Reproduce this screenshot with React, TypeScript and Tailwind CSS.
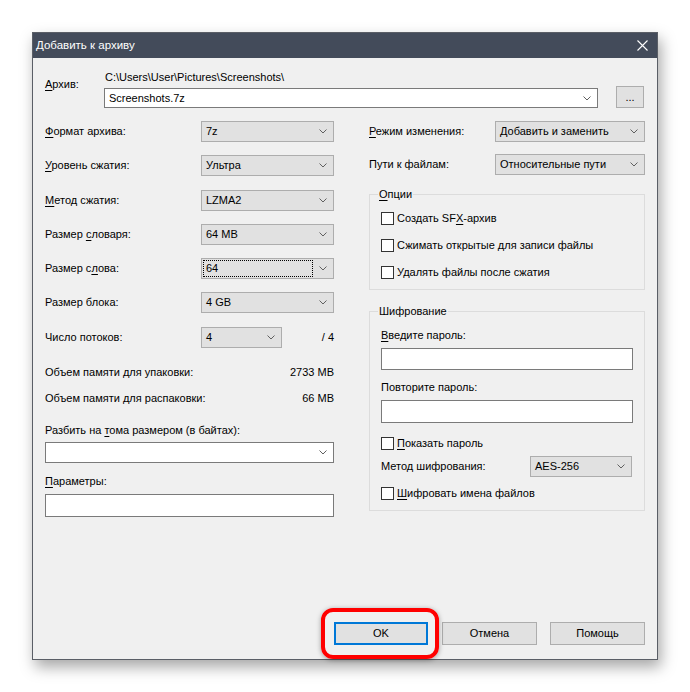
import React from "react";

const font = { fontFamily: '"Liberation Sans", Arial, sans-serif' };

function Chevron() {
  return (
    <svg width="8" height="5" viewBox="0 0 8 5" className="shrink-0">
      <polyline points="0.5,0.5 4,4 7.5,0.5" fill="none" stroke="#606060" strokeWidth="1" />
    </svg>
  );
}

function Select({
  value,
  className = "",
  focus = false,
  white = false,
}: {
  value: string;
  className?: string;
  focus?: boolean;
  white?: boolean;
}) {
  return (
    <div
      className={`flex items-stretch border p-[1px] ${
        white ? "bg-white border-[#7a7a7a]" : "bg-[#e1e1e1] border-[#adadad]"
      } ${className}`}
    >
      <div
        className={`flex-1 flex items-center pl-[2px] leading-[15px] whitespace-nowrap overflow-hidden ${
          focus ? "border border-dotted border-black pl-[1px]" : "border border-transparent"
        }`}
      >
        {value}
      </div>
      <div className="w-[19px] flex items-center justify-center">
        <Chevron />
      </div>
    </div>
  );
}

function Checkbox({ children }: { children: React.ReactNode }) {
  return (
    <div className="flex items-center h-[16px]">
      <div className="w-[13px] h-[13px] border border-[#333] bg-white shrink-0" />
      <span className="ml-[3px] leading-[15px] whitespace-nowrap">{children}</span>
    </div>
  );
}

function Row({ label, children }: { label: React.ReactNode; children: React.ReactNode }) {
  return (
    <div className="flex items-center h-[21px]">
      <div className="w-[156px] leading-[15px] whitespace-nowrap">{label}</div>
      {children}
    </div>
  );
}

export default function App() {
  return (
    <div className="min-h-screen bg-white pl-[32px] pt-[32px] text-[11px] text-black" style={font}>
      <div className="w-[626px] h-[628px] border border-[#5a5e66] bg-[#f0f0f0] flex flex-col shadow-[3px_7px_14px_rgba(0,0,0,0.35)]">
        {/* title bar */}
        <div className="h-[25px] bg-[#434b5a] flex items-center pl-[3px] pr-[9px] text-white text-[11.5px] shrink-0">
          <span className="flex-1">Добавить к архиву</span>
          <svg width="11" height="11" viewBox="0 0 11 11">
            <path d="M0.5 0.5 L10.5 10.5 M10.5 0.5 L0.5 10.5" stroke="#fff" strokeWidth="1.1" />
          </svg>
        </div>

        <div className="flex-1 flex flex-col px-[12px] pt-[12px]">
          {/* archive path */}
          <div className="flex">
            <div className="w-[59px] pt-[7px] leading-[15px]">
              <u className="underline-offset-2">А</u>рхив:
            </div>
            <div className="w-[494px] flex flex-col">
              <div className="h-[15px] leading-[15px] pl-[1px]">C:\Users\User\Pictures\Screenshots\</div>
              <Select value="Screenshots.7z" white className="h-[20px] mt-[3px]" />
            </div>
            <div className="ml-[18px] mt-[16px] w-[28px] h-[22px] border border-[#adadad] bg-[#e1e1e1] flex items-center justify-center leading-none">
              ...
            </div>
          </div>

          {/* columns */}
          <div className="flex mt-[13px]">
            {/* left column */}
            <div className="w-[289px] flex flex-col">
              <div className="flex flex-col gap-[13.3px]">
                <Row label={<><u className="underline-offset-2">Ф</u>ормат архива:</>}>
                  <Select value="7z" className="w-[133px] h-[21px]" />
                </Row>
                <Row label={<><u className="underline-offset-2">У</u>ровень сжатия:</>}>
                  <Select value="Ультра" className="w-[133px] h-[21px]" />
                </Row>
                <Row label={<><u className="underline-offset-2">М</u>етод сжатия:</>}>
                  <Select value="LZMA2" className="w-[133px] h-[21px]" />
                </Row>
                <Row label={<>Размер <u className="underline-offset-2">с</u>ловаря:</>}>
                  <Select value="64 MB" className="w-[133px] h-[21px]" />
                </Row>
                <Row label={<>Размер с<u className="underline-offset-2">л</u>ова:</>}>
                  <Select value="64" focus className="w-[133px] h-[21px]" />
                </Row>
                <Row label="Размер блока:">
                  <Select value="4 GB" className="w-[133px] h-[21px]" />
                </Row>
                <Row label="Число потоков:">
                  <Select value="4" className="w-[81px] h-[21px]" />
                  <span className="ml-auto leading-[15px]">/ 4</span>
                </Row>
              </div>

              <div className="flex justify-between leading-[16px] h-[16px] mt-[16px]">
                <span>Объем памяти для упаковки:</span>
                <span>2733 MB</span>
              </div>
              <div className="flex justify-between leading-[16px] h-[16px] mt-[10px]">
                <span>Объем памяти для распаковки:</span>
                <span>66 MB</span>
              </div>

              <div className="leading-[16px] h-[16px] mt-[16px]">
                Разбить на <u className="underline-offset-2">т</u>ома размером (в байтах):
              </div>
              <Select value="" white className="h-[21px] mt-[4px]" />

              <div className="leading-[16px] h-[16px] mt-[10px]">
                <u className="underline-offset-2">П</u>араметры:
              </div>
              <div className="h-[23px] mt-[5px] border border-[#7a7a7a] bg-white" />
            </div>

            {/* right column */}
            <div className="ml-[35px] w-[277px] flex flex-col">
              <div className="flex items-center h-[21px]">
                <span className="flex-1 leading-[15px]">
                  <u className="underline-offset-2">Р</u>ежим изменения:
                </span>
                <Select value="Добавить и заменить" className="w-[150px] h-[21px]" />
              </div>
              <div className="flex items-center h-[21px] mt-[12px]">
                <span className="flex-1 leading-[15px]">Пути к файлам:</span>
                <Select value="Относительные пути" className="w-[150px] h-[21px]" />
              </div>

              <fieldset className="mt-[12px] border border-[#dcdcdc] pl-[11px] pr-[11px] pt-[8px] pb-[9px] min-w-0">
                <legend className="ml-[-3px] px-[1px] leading-[15px]">
                  <u className="underline-offset-2">О</u>пции
                </legend>
                <div className="flex flex-col gap-[11px]">
                  <Checkbox>
                    Создать SF<u className="underline-offset-2">X</u>-архив
                  </Checkbox>
                  <Checkbox>Сжимать открытые для записи файлы</Checkbox>
                  <Checkbox>Удалять файлы после сжатия</Checkbox>
                </div>
              </fieldset>

              <fieldset className="mt-[14px] border border-[#dcdcdc] pl-[11px] pr-[11px] pt-[8px] pb-[9px] min-w-0">
                <legend className="ml-[-3px] px-[1px] leading-[15px]">Шифрование</legend>
                <div className="leading-[16px] h-[16px]">
                  <u className="underline-offset-2">В</u>ведите пароль:
                </div>
                <div className="h-[22px] mt-[5px] border border-[#7a7a7a] bg-white" />
                <div className="leading-[16px] h-[16px] mt-[9px]">Повторите пароль:</div>
                <div className="h-[23px] mt-[5px] border border-[#7a7a7a] bg-white" />
                <div className="mt-[12px]">
                  <Checkbox>
                    <u className="underline-offset-2">П</u>оказать пароль
                  </Checkbox>
                </div>
                <div className="flex items-center h-[21px] mt-[5px]">
                  <span className="flex-1 leading-[15px]">Метод шифрования:</span>
                  <Select value="AES-256" className="w-[102px] h-[21px] mr-[1px]" />
                </div>
                <div className="mt-[8px]">
                  <Checkbox>
                    <u className="underline-offset-2">Ш</u>ифровать имена файлов
                  </Checkbox>
                </div>
              </fieldset>
            </div>
          </div>

          {/* buttons */}
          <div className="mt-auto mb-[14px] flex justify-end">
            <div className="relative">
              <div className="w-[94px] h-[23px] border-2 border-[#0078d7] bg-[#e1e1e1] flex items-center justify-center">
                OK
              </div>
              <div className="absolute left-[-13px] top-[-14px] w-[118px] h-[51px] border-[4px] border-[#ff0000] rounded-[12px] shadow-[0_1px_5px_rgba(0,0,0,0.35)] pointer-events-none" />
            </div>
            <div className="ml-[14px] w-[95px] h-[23px] border border-[#adadad] bg-[#e1e1e1] flex items-center justify-center">
              Отмена
            </div>
            <div className="ml-[13px] w-[95px] h-[23px] border border-[#adadad] bg-[#e1e1e1] flex items-center justify-center">
              Помощь
            </div>
          </div>
        </div>
      </div>
    </div>
  );
}
